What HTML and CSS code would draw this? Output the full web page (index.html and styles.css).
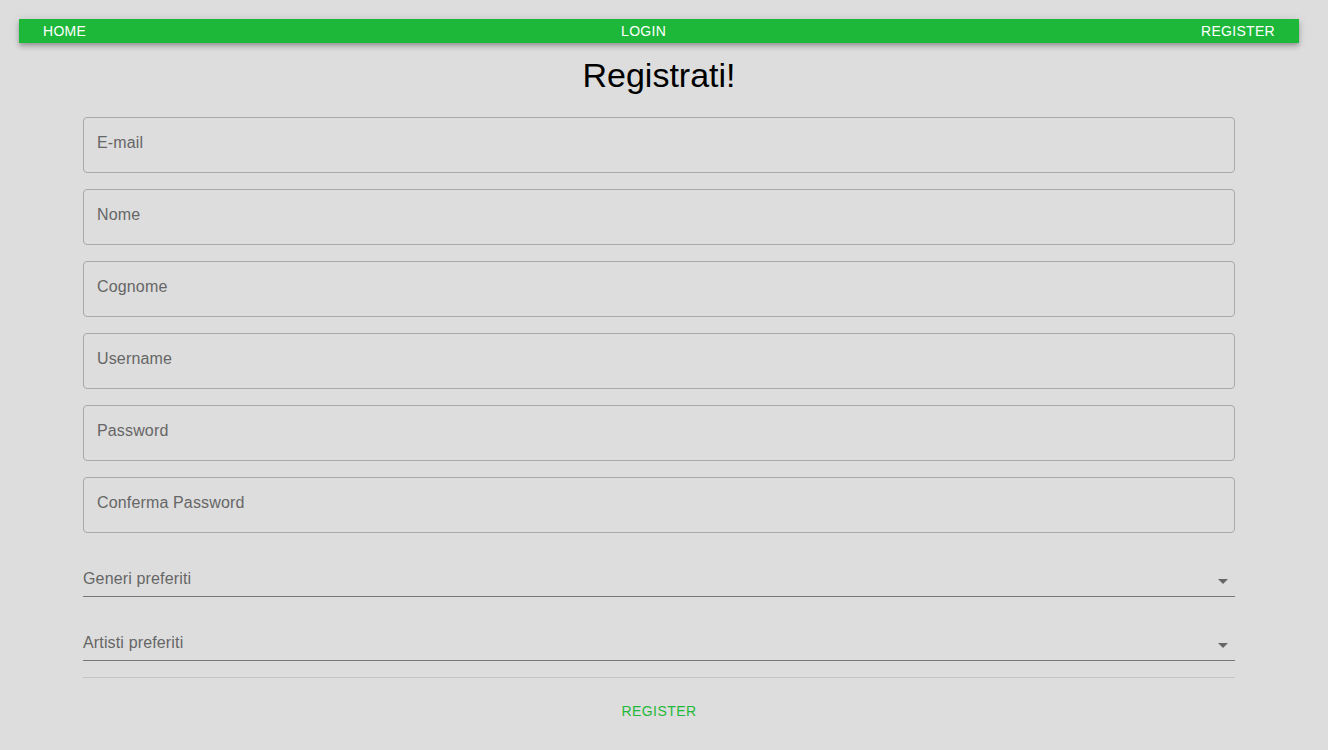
FILE: index.html
```html
<!DOCTYPE html>
<html lang="it">
<head>
<meta charset="utf-8">
<title>Registrati</title>
<link rel="stylesheet" href="styles.css">
</head>
<body>
<div class="page">
  <nav class="navbar">
    <a class="nav-link">HOME</a>
    <a class="nav-link">LOGIN</a>
    <a class="nav-link">REGISTER</a>
  </nav>
  <h1 class="title">Registrati!</h1>
  <form class="form">
    <div class="field"><span class="field-label">E-mail</span></div>
    <div class="field"><span class="field-label">Nome</span></div>
    <div class="field"><span class="field-label">Cognome</span></div>
    <div class="field"><span class="field-label">Username</span></div>
    <div class="field"><span class="field-label">Password</span></div>
    <div class="field"><span class="field-label">Conferma Password</span></div>
    <div class="select">
      <span class="select-label">Generi preferiti</span>
      <svg class="caret" width="10" height="5" viewBox="0 0 10 5"><path d="M0 0h10L5 5z" fill="#666"/></svg>
    </div>
    <div class="select">
      <span class="select-label">Artisti preferiti</span>
      <svg class="caret" width="10" height="5" viewBox="0 0 10 5"><path d="M0 0h10L5 5z" fill="#666"/></svg>
    </div>
    <div class="divider"></div>
    <div class="actions"><span class="btn">REGISTER</span></div>
  </form>
</div>
</body>
</html>
```
FILE: styles.css
```css
html, body {
  margin: 0;
  padding: 0;
  background: #dddddd;
  font-family: "Liberation Sans", Arial, sans-serif;
}
.page {
  padding: 19px 29px 0 19px;
}
.navbar {
  height: 24px;
  background: #1db83a;
  display: flex;
  justify-content: space-between;
  align-items: center;
  padding: 0 24px;
  box-shadow: 0 2px 4px -1px rgba(0,0,0,0.2), 0 4px 5px 0 rgba(0,0,0,0.14), 0 1px 10px 0 rgba(0,0,0,0.12);
}
.nav-link {
  color: #ffffff;
  font-size: 14px;
  line-height: 24px;
  letter-spacing: 0.3px;
}
.title {
  margin: 12px 0 0 0;
  text-align: center;
  font-weight: 400;
  font-size: 34px;
  line-height: 40px;
  color: #000;
}
.form {
  margin: 22px 64px 0 64px;
  display: flex;
  flex-direction: column;
}
.field {
  height: 54px;
  border: 1px solid #a9a9a9;
  border-radius: 4px;
  display: flex;
  align-items: center;
  padding: 0 13px;
  margin-bottom: 16px;
}
.field-label {
  font-size: 16px;
  color: #666666;
  margin-top: -5px;
  letter-spacing: 0.15px;
}
.select {
  height: 47px;
  border-bottom: 1px solid #777777;
  display: flex;
  align-items: flex-end;
  justify-content: space-between;
  margin-bottom: 16px;
}
.select-label {
  font-size: 16px;
  color: #666666;
  margin-bottom: 8px;
  letter-spacing: 0.15px;
}
.caret {
  margin-right: 7px;
  margin-bottom: 12px;
}
.divider {
  height: 1px;
  background: #c4c4c4;
}
.actions {
  display: flex;
  justify-content: center;
  padding-top: 24px;
}
.btn {
  color: #1db83a;
  font-size: 14px;
  line-height: 18px;
  letter-spacing: 0.45px;
}
```
